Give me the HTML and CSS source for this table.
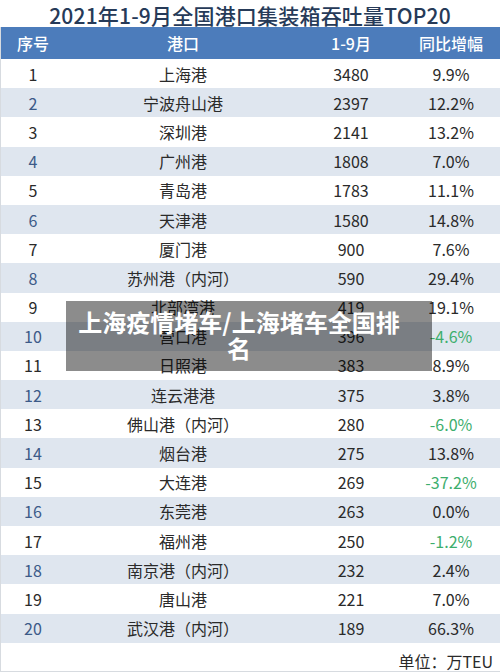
FILE: index.html
```html
<!DOCTYPE html>
<html lang="zh-CN">
<head>
    <meta charset="UTF-8">
    <meta name="viewport" content="width=device-width, initial-scale=1.0">
    <title>上海疫情堵车/上海堵车全国排名</title>
    <link rel="stylesheet" href="styles.css">
</head>
<body>
    <div class="page">
        <h1 class="title">2021年1-9月全国港口集装箱吞吐量TOP20</h1>

        <div class="table">
            <div class="row head">
                <span>序号</span>
                <span>港口</span>
                <span>1-9月</span>
                <span>同比增幅</span>
            </div>

            <div class="row"><span class="no">1</span><span>上海港</span><span>3480</span><span>9.9%</span></div>
            <div class="row alt"><span class="no">2</span><span>宁波舟山港</span><span>2397</span><span>12.2%</span></div>
            <div class="row"><span class="no">3</span><span>深圳港</span><span>2141</span><span>13.2%</span></div>
            <div class="row alt"><span class="no">4</span><span>广州港</span><span>1808</span><span>7.0%</span></div>
            <div class="row"><span class="no">5</span><span>青岛港</span><span>1783</span><span>11.1%</span></div>
            <div class="row alt"><span class="no">6</span><span>天津港</span><span>1580</span><span>14.8%</span></div>
            <div class="row"><span class="no">7</span><span>厦门港</span><span>900</span><span>7.6%</span></div>
            <div class="row alt"><span class="no">8</span><span>苏州港（内河）</span><span>590</span><span>29.4%</span></div>
            <div class="row"><span class="no">9</span><span>北部湾港</span><span>419</span><span>19.1%</span></div>
            <div class="row alt"><span class="no">10</span><span>营口港</span><span>396</span><span class="down">-4.6%</span></div>
            <div class="row"><span class="no">11</span><span>日照港</span><span>383</span><span>8.9%</span></div>
            <div class="row alt"><span class="no">12</span><span>连云港港</span><span>375</span><span>3.8%</span></div>
            <div class="row"><span class="no">13</span><span>佛山港（内河）</span><span>280</span><span class="down">-6.0%</span></div>
            <div class="row alt"><span class="no">14</span><span>烟台港</span><span>275</span><span>13.8%</span></div>
            <div class="row"><span class="no">15</span><span>大连港</span><span>269</span><span class="down">-37.2%</span></div>
            <div class="row alt"><span class="no">16</span><span>东莞港</span><span>263</span><span>0.0%</span></div>
            <div class="row"><span class="no">17</span><span>福州港</span><span>250</span><span class="down">-1.2%</span></div>
            <div class="row alt"><span class="no">18</span><span>南京港（内河）</span><span>232</span><span>2.4%</span></div>
            <div class="row"><span class="no">19</span><span>唐山港</span><span>221</span><span>7.0%</span></div>
            <div class="row alt"><span class="no">20</span><span>武汉港（内河）</span><span>189</span><span>66.3%</span></div>

            <div class="unit">单位：万TEU</div>
        </div>

        <div class="banner">上海疫情堵车/上海堵车全国排名</div>
    </div>
</body>
</html>
```

FILE: styles.css
```css
*{
    margin: 0;
    padding: 0;
    box-sizing: border-box;
}

body{
    background-color: #fff;
    font-family: "Noto Sans CJK SC", "Noto Sans", sans-serif;
    color: #2a2a2a;
}

.page{
    position: relative;
    width: 500px;
    height: 672px;
    overflow: hidden;
}

.title{
    height: 27px;
    font-size: 21px;
    font-weight: 500;
    line-height: 30px;
    text-align: center;
    color: #263a58;
    letter-spacing: 0.2px;
}

.table{
    border-left: 1px solid #d7dbe0;
    border-bottom: 1px solid #d7dbe0;
}

.row{
    display: grid;
    grid-template-columns: 64px 236px 100px 100px;
    height: 29.2px;
    align-items: center;
    font-size: 16px;
    text-align: center;
}

.row span{
    line-height: 20px;
}

.head{
    height: 32px;
    background-color: #4c7cbb;
    color: #fff;
    font-weight: 500;
}

.alt{
    background-color: #dfe6ef;
}

.alt .no{
    color: #3c5a88;
}

.down{
    color: #3dae6d;
}

.unit{
    height: 28px;
    padding: 8px 7px 0 0;
    font-size: 16px;
    line-height: 20px;
    text-align: right;
    color: #2a2a2a;
}

/* grey caption strip laid over the table */
.banner{
    position: absolute;
    left: 66px;
    top: 301px;
    width: 366px;
    height: 70px;
    padding: 8px 32px 0 12px;
    background-color: rgba(0, 0, 0, 0.45);
    color: #fff;
    font-size: 24px;
    font-weight: 700;
    line-height: 26px;
    text-align: center;
}
```
